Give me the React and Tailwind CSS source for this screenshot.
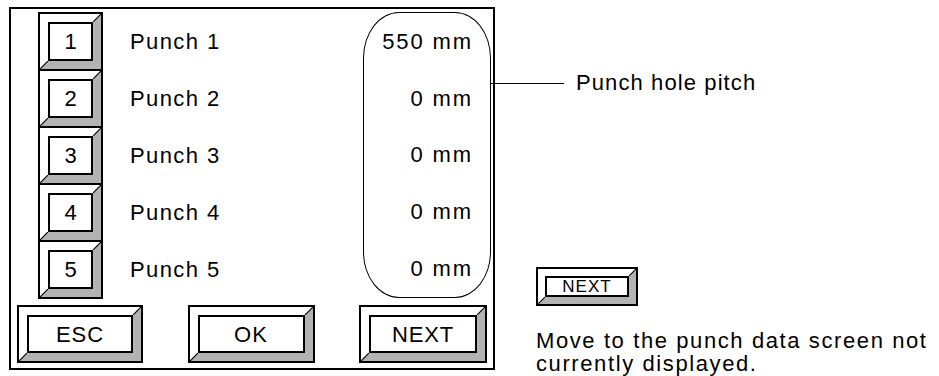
import React from 'react';

const font = { fontFamily: '"Liberation Sans", Arial, sans-serif' };

// raised button: black outline, white top/left bevel, grey bottom/right bevel, framed face
const BevelButton = ({ className, children, textClass, small }) => {
  const bevel = small ? 'border-[7px]' : 'border-[8px]';
  const corner = small
    ? ['absolute -top-[7px] -right-[7px] w-[7px] h-[7px]', 'absolute -bottom-[7px] -left-[7px] w-[7px] h-[7px]']
    : ['absolute -top-[8px] -right-[8px] w-[8px] h-[8px]', 'absolute -bottom-[8px] -left-[8px] w-[8px] h-[8px]'];
  return (
    <div className={`border-2 border-black bg-white ${className}`}>
      <div className={`relative h-full ${bevel} border-t-white border-l-white border-r-[#b3b3b3] border-b-[#b3b3b3]`}>
        <div className={`h-full border-2 border-black bg-white flex items-center justify-center text-black ${textClass}`}>
          {children}
        </div>
        {corner.map((c) => (
          <svg key={c} className={c} viewBox="0 0 8 8" preserveAspectRatio="none">
            <line x1="0" y1="8" x2="8" y2="0" stroke="black" strokeWidth="1.2" />
          </svg>
        ))}
      </div>
    </div>
  );
};

const rows = [
  { n: '1', label: 'Punch 1', value: '550 mm' },
  { n: '2', label: 'Punch 2', value: '0 mm' },
  { n: '3', label: 'Punch 3', value: '0 mm' },
  { n: '4', label: 'Punch 4', value: '0 mm' },
  { n: '5', label: 'Punch 5', value: '0 mm' },
];

export default function App() {
  return (
    <div className="w-[939px] h-[376px] bg-white flex text-black" style={font}>
      {/* Screen frame */}
      <div className="ml-[9px] mt-[7px] w-[486px] h-[363px] border-2 border-black flex flex-col">
        <div className="flex pt-[3px] pl-[27px]">
          {/* number keys + labels */}
          <div className="w-[325px] flex flex-col">
            {rows.map((r, i) => (
              <div key={r.n} className={`flex items-center ${i > 0 ? '-mt-[2px]' : ''}`}>
                <BevelButton className="w-[65px] h-[59px]" textClass="text-[22px]">
                  {r.n}
                </BevelButton>
                <span className="ml-[27px] text-[22px] tracking-[1.4px]">{r.label}</span>
              </div>
            ))}
          </div>
          {/* values */}
          <div className="relative w-[128px] h-[286px] border-[1.5px] border-black rounded-[36px_/_46px] flex flex-col">
            {rows.map((r) => (
              <div key={r.n} className="flex-1 flex items-center justify-end pr-[17px] text-[22px] tracking-[1.9px]">
                {r.value}
              </div>
            ))}
            <div className="absolute left-full top-[70px] w-[74px] h-px bg-black" />
          </div>
        </div>
        <div className="flex justify-between px-[6px] mt-[6px]">
          <BevelButton className="w-[126px] h-[58px]" textClass="text-[22px] tracking-[1px]">ESC</BevelButton>
          <BevelButton className="w-[127px] h-[58px]" textClass="text-[22px] tracking-[1px]">OK</BevelButton>
          <BevelButton className="w-[128px] h-[58px]" textClass="text-[22px] tracking-[0.8px]">NEXT</BevelButton>
        </div>
      </div>

      {/* Annotations */}
      <div className="ml-[41px] flex flex-col">
        <div className="mt-[71px] ml-[40px] h-[24px] leading-[24px] text-[22px] tracking-[1.1px]">
          Punch hole pitch
        </div>
        <BevelButton small className="mt-[172px] w-[102px] h-[39px]" textClass="text-[17px] tracking-[1px]">
          NEXT
        </BevelButton>
        <p className="mt-[23px] text-[22px] leading-[23px] tracking-[1.6px] w-[400px]">
          Move to the punch data screen not
          <br />
          currently displayed.
        </p>
      </div>
    </div>
  );
}
